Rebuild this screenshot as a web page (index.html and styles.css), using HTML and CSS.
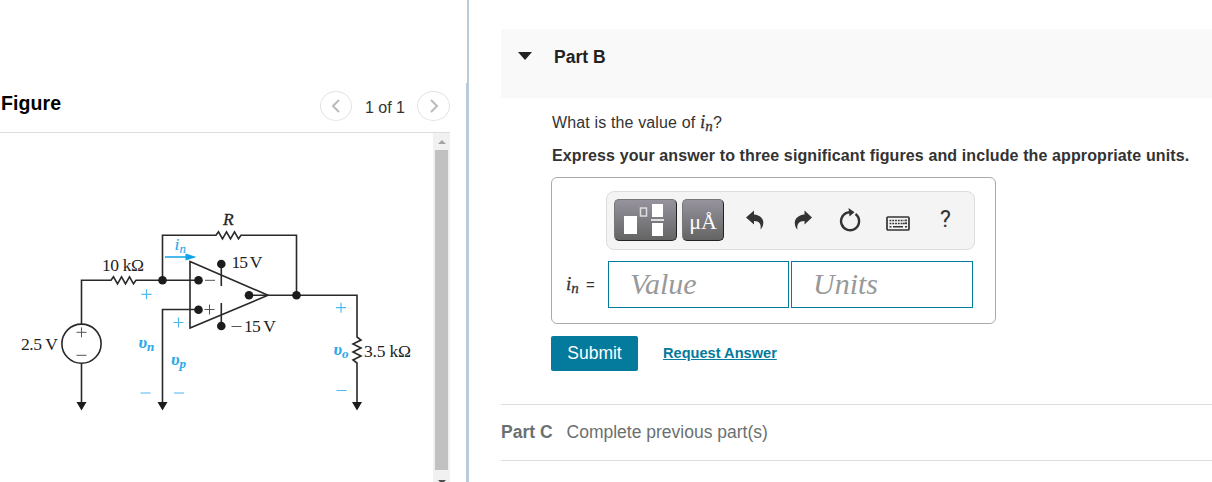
FILE: index.html
```html
<!DOCTYPE html>
<html lang="en">
<head>
  <meta charset="UTF-8">
  <title>Part B</title>
  <link rel="stylesheet" href="styles.css">
</head>
<body>
  <div class="left">
    <div class="figure-head">
      <h2>Figure</h2>
      <div class="pager">
        <button class="round"><svg width="10" height="14" viewBox="0 0 10 14"><path d="M8 1L2 7l6 6"/></svg></button>
        <span>1 of 1</span>
        <button class="round"><svg width="10" height="14" viewBox="0 0 10 14"><path d="M2 1l6 6-6 6"/></svg></button>
      </div>
    </div>
    <div class="figure-body">
      <svg class="circuit" width="433" height="349" viewBox="0 133 433 349">
        <!-- wires -->
        <g class="wire">
          <path d="M81.5 324V280.3H111l2.500-3.500 4 7 4-7 4 7 4-7 4 7 2.500-3.500H198"/>
          <path d="M162.500 280V235.300H216l2.500-3.500 4 7 4-7 4 7 4-7 4 7 2.500-3.500H296.500V295"/>
          <path d="M190 261.500V328L268 295.300Z"/>
          <path d="M198 309.500H162.500V403"/>
          <path d="M249 295.300H357V337l4 3-8 4 8 4-8 4 8 4-8 4 4 3V403"/>
          <path d="M81.500 363V403"/>
          <path d="M221.300 264V286M221.300 303V326"/>
          <circle cx="81.500" cy="343.700" r="19.600"/>
        </g>
        <g class="dot">
          <circle cx="162.500" cy="280.300" r="4.300"/>
          <circle cx="198.500" cy="280.300" r="4.300"/>
          <circle cx="198.500" cy="309.800" r="4.300"/>
          <circle cx="221.300" cy="264" r="4.300"/>
          <circle cx="221.300" cy="326" r="4.300"/>
          <circle cx="249" cy="295.300" r="4.300"/>
          <circle cx="296.500" cy="295.300" r="4.300"/>
          <path d="M76.500 402h10l-5 8.500zM157.500 402h10l-5 8.500zM352 402h10l-5 8.500z"/>
        </g>
        <!-- polarity signs -->
        <path class="sign" d="M76.500 332.300h10M81.500 327.300v10M76.500 355.300h10M205 280.300h10M204.500 309.500h10M209.500 304.500v10M231.500 326.500h10"/>
        <path class="sign blue" d="M141.500 294.300h10M146.500 289.300v10M173.500 322.500h10M178.500 317.500v10M336 307.700h10M341 302.700v10M140.500 393h10M174 393h10M336.500 390.500h10"/>
        <path class="arrow" d="M165 257h22"/>
        <path class="arrowhead" d="M185.500 253.500v7l11-3.500z"/>
        <!-- labels -->
        <text x="102" y="271" textLength="42">10 kΩ</text>
        <text x="21" y="350" textLength="37">2.5 V</text>
        <text x="231.500" y="268" textLength="31">15 V</text>
        <text x="244" y="332" textLength="32">15 V</text>
        <text x="364" y="356.500" textLength="47">3.5 kΩ</text>
        <text class="it name" x="223" y="224.500" textLength="12">R</text>
        <text class="it name blue" x="174.500" y="249.500">i<tspan class="sub" dy="3">n</tspan></text>
        <text class="it bold blue" x="138.500" y="348">υ<tspan class="sub" dy="3">n</tspan></text>
        <text class="it bold blue" x="171" y="364.500">υ<tspan class="sub" dy="3">p</tspan></text>
        <text class="it bold blue" x="333.500" y="355">υ<tspan class="sub" dy="3">o</tspan></text>
      </svg>
      <div class="scrollbar">
        <svg class="up" width="8" height="4" viewBox="0 0 8 4"><path d="M0 4l4-4 4 4z"/></svg>
        <div class="thumb"></div>
        <svg class="down" width="8" height="4" viewBox="0 0 8 4"><path d="M0 0l4 4 4-4z"/></svg>
      </div>
    </div>
  </div>
  <div class="divider"></div>
  <div class="right">
    <div class="part-head">
      <svg width="14" height="8" viewBox="0 0 14 8"><path d="M0 0h14L7 8z"/></svg>
      <h3>Part B</h3>
    </div>
    <div class="question">
      <p class="ask">What is the value of <span class="math">i<sub>n</sub></span>?</p>
      <p class="hint">Express your answer to three significant figures and include the appropriate units.</p>
      <div class="answer">
        <div class="toolbar">
          <button class="dark templates">
            <svg width="42" height="34" viewBox="0 0 42 34">
              <path class="fill" d="M1 12h13v18H1zM29 0h11v13H29zM29 19h11v13H29zM28 15.300h13v1.400H28z"/>
              <path class="line" d="M17.500 4h6v8h-6z"/>
            </svg>
          </button>
          <button class="dark units">μÅ</button>
          <svg class="tool" width="18" height="20" viewBox="0 0 18 20"><path d="M0 7.500L8 0.500V4.500C14 5 18 8.500 17.200 14C17 16.500 15.500 18.500 14.500 19.500C15.500 14 13.500 11 8 11V14.500Z"/></svg>
          <svg class="tool" width="18" height="20" viewBox="0 0 18 20"><path d="M18 7.500L10.500 0.500V4.500C4 5 .5 9 .8 13.500C1 16.500 2 18.500 3.500 19.500C2.500 14 5 11 10.500 11V14.500Z"/></svg>
          <svg class="tool reset" width="22" height="24" viewBox="0 0 22 24"><path class="ring" d="M16.500 6A9 9 0 1 1 10.500 4.200"/><path d="M9.500 0l6 4.300-5 4.200z"/></svg>
          <svg class="tool keyboard" width="24" height="15" viewBox="0 0 24 15">
            <rect class="frame" x="1" y="1" width="22" height="13" rx="1"/>
            <path class="keys" d="M3.500 4.500h15M3.500 7.500h13M20 3.500v5M17 7.500h4"/>
            <path class="space" d="M3.500 10.800h2M7 10.800h10M19 10.800h2"/>
          </svg>
          <span class="help">?</span>
        </div>
        <div class="entry">
          <label><span class="math">i<sub>n</sub></span> <span class="eq">=</span></label>
          <div class="field">Value</div>
          <div class="field last">Units</div>
        </div>
      </div>
      <div class="actions">
        <button class="submit">Submit</button>
        <a class="request">Request Answer</a>
      </div>
    </div>
    <div class="part-next"><b>Part C</b><span>Complete previous part(s)</span></div>
  </div>
</body>
</html>
```
FILE: styles.css
```css
*{
  box-sizing: border-box;
  padding: 0;
  margin: 0;
}
body{
  display: flex;
  width: 1212px;
  height: 482px;
  overflow: hidden;
  background: #fff;
  color: #333;
  font-family: "Liberation Sans", Arial, sans-serif;
  font-size: 16px;
  line-height: 20px;
}
svg{
  display: block;
  flex: none;
}
button{
  border: 0;
  font-family: inherit;
}

/* figure */
.left{
  width: 450px;
  padding-top: 83px;
}
.figure-head{
  display: flex;
  justify-content: space-between;
  height: 50px;
  padding-top: 8px;
  border-bottom: 1px solid #ddd;
}
.figure-head h2{
  padding: 2px 0 0 1px;
  color: #000;
  font-size: 19.5px;
  letter-spacing: 0.1px;
}
.pager{
  display: flex;
}
.pager span{
  width: 65px;
  padding: 7px 0 0 1px;
  text-align: center;
}
.round{
  display: flex;
  align-items: center;
  justify-content: center;
  width: 32px;
  height: 30px;
  border: 1px solid #e3e3e3;
  border-radius: 50%;
  background: #fff;
}
.round:last-child{
  width: 33px;
}
.round path{
  fill: none;
  stroke: #bbb;
  stroke-width: 2;
}
.figure-body{
  display: flex;
  height: 349px;
}
.scrollbar{
  display: flex;
  flex-direction: column;
  align-items: center;
  width: 17px;
  padding-top: 7px;
  background: #f1f1f1;
}
.up{
  fill: #a3a3a3;
}
.down{
  margin-top: 10px;
  fill: #505050;
}
.thumb{
  flex: none;
  width: 13px;
  height: 320px;
  margin-top: 6px;
  background: #c1c1c1;
}
.divider{
  width: 3px;
  margin-left: 16px;
  border-right: 2px solid #b9cbdb;
  background: linear-gradient(#fff 83px, #b9cbdb 83px);
}

/* circuit drawing */
.circuit{
  font-family: "Liberation Serif", "Times New Roman", serif;
  font-size: 17.5px;
  fill: #222;
}
.wire{
  fill: none;
  stroke: #292929;
  stroke-width: 1.6;
}
.dot{
  fill: #1c1c1c;
}
.sign{
  stroke: #555;
  stroke-width: 1;
}
.sign.blue{
  stroke: #4db9f2;
  stroke-width: 1.2;
}
.arrow{
  stroke: #0da2ea;
  stroke-width: 1.5;
}
.arrowhead{
  fill: #0da2ea;
}
.it{
  font-style: italic;
}
.bold{
  font-weight: bold;
}
.name{
  stroke: currentColor;
  stroke-width: 0.3;
}
text.blue{
  fill: #2ba9e8;
  stroke: #2ba9e8;
  stroke-width: 0.1;
}
.sub{
  font-size: 13px;
}

/* question */
.right{
  flex: 1;
  padding: 29px 0 0 32px;
}
.part-head{
  display: flex;
  height: 69px;
  padding: 23px 0 0 17px;
  background: #f9f9f9;
}
.part-head svg{
  margin: 0 22px 0 0;
  fill: #222;
}
.part-head h3{
  margin-top: -5px;
  color: #222;
  font-size: 17.5px;
}
.question{
  padding: 14px 0 0 50px;
  height: 306px;
}
.ask{
  height: 34px;
  padding: 1px 0 0 1px;
  letter-spacing: 0.14px;
}
.hint{
  height: 31px;
  padding-left: 1px;
  font-weight: bold;
  letter-spacing: 0.115px;
  white-space: nowrap;
}
.math{
  font-family: "Liberation Serif", "Times New Roman", serif;
  font-size: 19px;
  font-style: italic;
  line-height: 16px;
  -webkit-text-stroke: 0.3px #333;
}
.math sub{
  font-size: 15px;
  line-height: 0;
  vertical-align: -3px;
}
.answer{
  width: 445px;
  height: 147px;
  padding: 13px 0 0 14px;
  border: 1px solid #aaa;
  border-radius: 6px;
}
.toolbar{
  display: flex;
  width: 369px;
  height: 59px;
  margin-left: 40px;
  padding: 7px;
  border: 1px solid #ddd;
  border-radius: 8px;
  background: #f4f4f4;
}
.dark{
  height: 42px;
  border: 1px solid #777;
  border-right-color: #222;
  border-bottom-color: #222;
  border-radius: 5px;
  background: linear-gradient(#96939e, #646464);
  color: #fff;
}
.templates{
  width: 63px;
  padding: 1px 0 0 8px;
}
.templates .fill{
  fill: #fff;
}
.templates .line{
  fill: none;
  stroke: #ddd;
  stroke-width: 1.5;
}
.units{
  width: 42px;
  margin-left: 5px;
  padding-top: 3px;
  font-family: "Liberation Serif", "Times New Roman", serif;
  font-size: 22px;
}
.tool{
  margin: 11px 0 0 22px;
  fill: #333;
}
.tool + .tool{
  margin-left: 30px;
}
.tool + .reset{
  margin: 9px 0 0 27px;
}
.ring{
  fill: none;
  stroke: #333;
  stroke-width: 2.4;
}
.tool + .keyboard{
  margin: 17px 0 0 25px;
}
.frame{
  fill: none;
  stroke: #333;
  stroke-width: 1.7;
}
.keys{
  stroke: #333;
  stroke-width: 1.7;
  stroke-dasharray: 1.8 1;
}
.space{
  stroke: #333;
  stroke-width: 1.5;
}
.help{
  margin: 11px 0 0 30px;
  font-family: Roboto, sans-serif;
  font-size: 23px;
}
.entry{
  display: flex;
  margin-top: 11px;
}
.entry label{
  width: 42px;
  padding-top: 14px;
  font-size: 15px;
}
.eq{
  margin-left: 3px;
}
.field{
  width: 181px;
  height: 47px;
  padding-left: 21px;
  border: 1px solid #047a9c;
  color: #999;
  font: italic 30px/44px "Liberation Serif", "Times New Roman", serif;
}
.field.last{
  width: 182px;
  margin-left: 2px;
}
.actions{
  display: flex;
  margin-top: 12px;
}
.submit{
  width: 87px;
  height: 35px;
  border-radius: 2px;
  background: #047a9c;
  color: #fff;
  font-size: 17.5px;
}
.request{
  margin: 7px 0 0 25px;
  color: #047a9c;
  font-size: 14.6px;
  font-weight: bold;
  text-decoration: underline;
}
.part-next{
  height: 57px;
  padding-top: 17px;
  border-top: 1px solid #ddd;
  border-bottom: 1px solid #ddd;
  color: #6a7070;
  font-size: 17.5px;
}
.part-next span{
  margin-left: 14px;
}
```
